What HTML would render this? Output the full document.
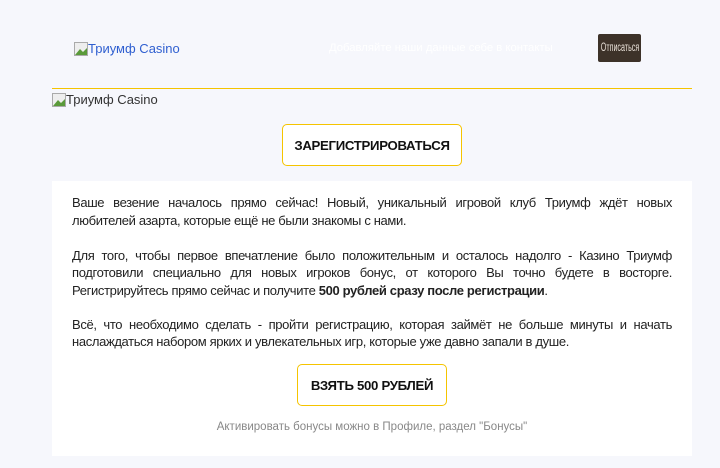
<!DOCTYPE html>
<html><head><meta charset="utf-8">
<style>
*{margin:0;padding:0;box-sizing:border-box}
body{width:720px;height:468px;background:#f6f7fc;font-family:"Liberation Sans",Arial,sans-serif;position:relative;overflow:hidden}
.abs{position:absolute}
.logo{font-size:13px;color:#2f5fd0;display:flex;align-items:center}
.ic{width:14px;height:14px;display:inline-block;vertical-align:middle}
.hdrtxt{left:329px;top:42px;font-size:11.3px;color:#fff}
.unsub{left:598px;top:34px;width:43px;height:28px;background:#3d3229;border-radius:2px;overflow:hidden}
.unsub span{position:absolute;left:50%;top:50%;transform:translate(-50%,-50%) scaleX(0.62);color:#e8e0d8;font-size:11.5px;white-space:nowrap}
.line{left:52px;top:88px;width:640px;height:1px;background:#f5c400}
.btn{border:1px solid #f5c400;border-radius:5px;background:#fff;font-weight:bold;font-size:13.2px;color:#111;display:flex;align-items:center;justify-content:center;letter-spacing:-0.3px}
.box{left:52px;top:181px;width:640px;height:275px;background:#fff}
.t{position:absolute;left:72px;width:600px;font-size:13px;color:#222;letter-spacing:-0.35px;white-space:nowrap}
.j{text-align:justify;text-align-last:justify;white-space:normal}
</style></head><body>
<div class="abs logo" style="left:74px;top:41px"><svg class="ic" viewBox="0 0 14 14"><rect x="0.5" y="0.5" width="13" height="13" fill="#eee" stroke="#aaa"/><path d="M1 13 L6 7 L9 10 L13 6 L13 13Z" fill="#5a9a3a"/></svg>Триумф Casino</div>
<div class="abs hdrtxt">Добавляйте наши данные себе в контакты</div>
<div class="abs unsub"><span>Отписаться</span></div>
<div class="abs line"></div>
<div class="abs logo" style="left:52px;top:92px;color:#333"><svg class="ic" viewBox="0 0 14 14"><rect x="0.5" y="0.5" width="13" height="13" fill="#eee" stroke="#aaa"/><path d="M1 13 L6 7 L9 10 L13 6 L13 13Z" fill="#5a9a3a"/></svg>Триумф Casino</div>
<div class="abs btn" style="left:282px;top:124px;width:180px;height:42px">ЗАРЕГИСТРИРОВАТЬСЯ</div>
<div class="abs box"></div>
<div class="t j" style="top:195px">Ваше везение началось прямо сейчас! Новый, уникальный игровой клуб Триумф ждёт новых</div>
<div class="t" style="top:213px">любителей азарта, которые ещё не были знакомы с нами.</div>
<div class="t j" style="top:248px">Для того, чтобы первое впечатление было положительным и осталось надолго - Казино Триумф</div>
<div class="t j" style="top:265px">подготовили специально для новых игроков бонус, от которого Вы точно будете в восторге.</div>
<div class="t" style="top:283px">Регистрируйтесь прямо сейчас и получите <b>500 рублей сразу после регистрации</b>.</div>
<div class="t j" style="top:317px">Всё, что необходимо сделать - пройти регистрацию, которая займёт не больше минуты и начать</div>
<div class="t" style="top:334px">наслаждаться набором ярких и увлекательных игр, которые уже давно запали в душе.</div>
<div class="abs btn" style="left:297px;top:364px;width:150px;height:42px">ВЗЯТЬ 500 РУБЛЕЙ</div>
<div class="abs" style="left:52px;top:421px;width:640px;text-align:center;font-size:11.5px;color:#888">Активировать бонусы можно в Профиле, раздел "Бонусы"</div>
</body></html>
